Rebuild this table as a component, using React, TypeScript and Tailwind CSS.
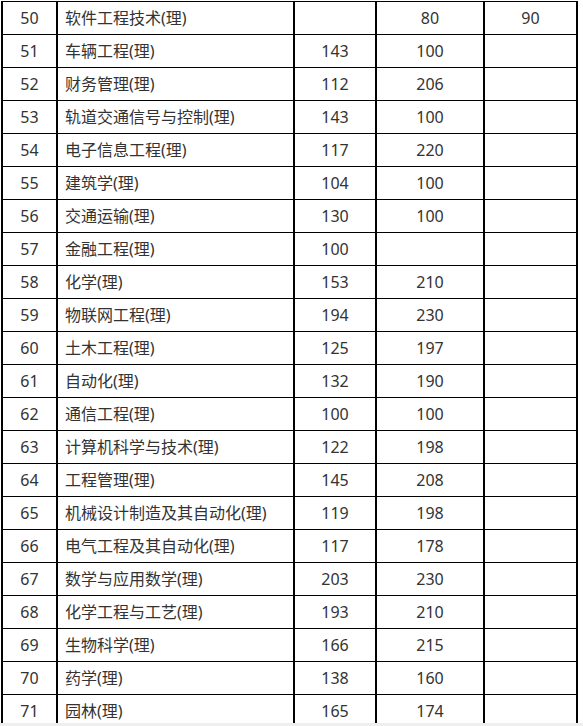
const rows: [string, string, string, string, string][] = [
  ["50", "软件工程技术(理)", "", "80", "90"],
  ["51", "车辆工程(理)", "143", "100", ""],
  ["52", "财务管理(理)", "112", "206", ""],
  ["53", "轨道交通信号与控制(理)", "143", "100", ""],
  ["54", "电子信息工程(理)", "117", "220", ""],
  ["55", "建筑学(理)", "104", "100", ""],
  ["56", "交通运输(理)", "130", "100", ""],
  ["57", "金融工程(理)", "100", "", ""],
  ["58", "化学(理)", "153", "210", ""],
  ["59", "物联网工程(理)", "194", "230", ""],
  ["60", "土木工程(理)", "125", "197", ""],
  ["61", "自动化(理)", "132", "190", ""],
  ["62", "通信工程(理)", "100", "100", ""],
  ["63", "计算机科学与技术(理)", "122", "198", ""],
  ["64", "工程管理(理)", "145", "208", ""],
  ["65", "机械设计制造及其自动化(理)", "119", "198", ""],
  ["66", "电气工程及其自动化(理)", "117", "178", ""],
  ["67", "数学与应用数学(理)", "203", "230", ""],
  ["68", "化学工程与工艺(理)", "193", "210", ""],
  ["69", "生物科学(理)", "166", "215", ""],
  ["70", "药学(理)", "138", "160", ""],
  ["71", "园林(理)", "165", "174", ""],
];

export default function App() {
  return (
    <div className="h-[726px] bg-[#efefef]">
      <div className="h-[723px] overflow-hidden bg-white pt-[1px]">
        <div
          className="ml-[1px] w-[577px] border-l-2 border-t border-black text-[16px] text-[#333]"
          style={{ fontFamily: '"Noto Sans", "Noto Sans CJK SC", sans-serif' }}
        >
          {rows.map((r) => (
            <div key={r[0]} className="flex h-[33px] border-b border-black">
              <div className="flex w-[55px] items-center justify-center border-r-2 border-black">{r[0]}</div>
              <div className="flex w-[237px] items-center border-r-2 border-black pl-[7px]">{r[1]}</div>
              <div className="flex w-[82px] items-center justify-center border-r-2 border-black">{r[2]}</div>
              <div className="flex w-[108px] items-center justify-center border-r-2 border-black">{r[3]}</div>
              <div className="flex w-[93px] items-center justify-center border-r-2 border-black">{r[4]}</div>
            </div>
          ))}
        </div>
      </div>
    </div>
  );
}
